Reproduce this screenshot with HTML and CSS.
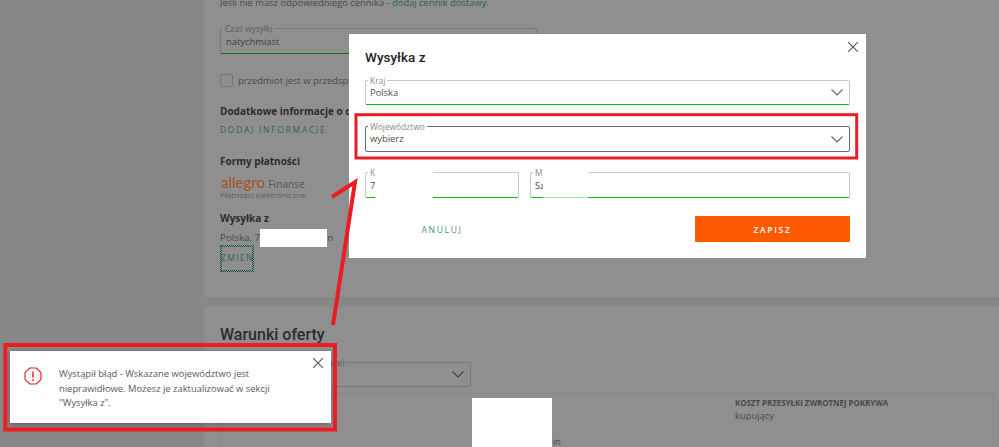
FILE: index.html
```html
<!DOCTYPE html>
<html lang="pl">
<head>
    <meta charset="UTF-8">
    <title>Wysyłka z</title>
    <link rel="stylesheet" href="styles.css">
</head>
<body>
    <div class="page">
        <div class="main">
            <section class="section section-top">
                <p class="hint">Jeśli nie masz odpowiedniego cennika - <a class="link">dodaj cennik dostawy.</a></p>
                <div class="field field-back field-ok field-time">
                    <span class="field-label">Czas wysyłki</span>
                    <span class="field-value">natychmiast</span>
                </div>
                <label class="check-row"><span class="check"></span>przedmiot jest w przedsprzedaży</label>
                <h4 class="sub first-sub">Dodatkowe informacje o dostawie</h4>
                <div class="action action-add">DODAJ INFORMACJE</div>
                <h4 class="sub pay-sub">Formy płatności</h4>
                <div class="logo"><span class="logo-mark">allegro</span> <span class="logo-name">Finanse</span></div>
                <div class="logo-note">Płatności elektroniczne.</div>
                <h4 class="sub ship-sub">Wysyłka z</h4>
                <div class="ship-line">Polska, 7<span class="ship-mask"></span>n</div>
                <div class="action action-change">ZMIEŃ</div>
            </section>
            <section class="section section-terms">
                <h2 class="terms-title">Warunki oferty</h2>
                <div class="field field-back field-return">
                    <span class="field-label">Warunki zwrotów (wymagane)</span>
                    <svg class="chevron" viewBox="0 0 12 7"><path d="M.5.5L6 6 11.5.5"/></svg>
                </div>
                <div class="terms-table">
                    <div></div>
                    <div class="terms-mid"><span class="mask-box"></span>in</div>
                    <div>
                        <div class="terms-head">KOSZT PRZESYŁKI ZWROTNEJ POKRYWA</div>
                        <div class="terms-val">kupujący</div>
                    </div>
                </div>
            </section>
        </div>
    </div>

    <div class="modal">
        <svg class="close modal-close" viewBox="0 0 10 10"><path d="M0 0l10 10M10 0L0 10"/></svg>
        <h3 class="modal-title">Wysyłka z</h3>
        <div class="field field-ok field-country">
            <span class="field-label">Kraj</span>
            <span class="field-value">Polska</span>
            <svg class="chevron" viewBox="0 0 12 7"><path d="M.5.5L6 6 11.5.5"/></svg>
        </div>
        <div class="field field-dark field-region">
            <span class="field-label">Województwo</span>
            <span class="field-value">wybierz</span>
            <svg class="chevron" viewBox="0 0 12 7"><path d="M.5.5L6 6 11.5.5"/></svg>
        </div>
        <div class="field-row">
            <div class="field field-ok">
                <span class="field-label">K</span>
                <span class="field-value">7</span>
                <span class="mask-code"></span>
            </div>
            <div class="field field-ok">
                <span class="field-label">M</span>
                <span class="field-value">Sz</span>
                <span class="mask-city"></span>
            </div>
        </div>
        <div class="modal-actions">
            <button class="btn-cancel">ANULUJ</button>
            <button class="btn-save">ZAPISZ</button>
        </div>
    </div>

    <div class="toast">
        <svg class="toast-icon" viewBox="0 0 18 18">
            <path class="octagon" d="M5.7 1h6.6L17 5.7v6.6L12.3 17H5.7L1 12.3V5.7z"/>
            <path class="mark" d="M9 4.5v6M9 12.3v1.6"/>
        </svg>
        <p class="toast-text">Wystąpił błąd - Wskazane województwo jest nieprawidłowe. Możesz je zaktualizować w sekcji "Wysyłka z".</p>
        <svg class="close toast-close" viewBox="0 0 10 10"><path d="M0 0l10 10M10 0L0 10"/></svg>
    </div>

    <!-- red marks drawn on top of the screenshot -->
    <svg class="marks" viewBox="0 0 999 447">
        <rect x="356" y="114.7" width="500.7" height="43.3"/>
        <rect x="5.3" y="345" width="329.7" height="84.5" class="thick"/>
        <path d="M332 197l23-15-22 143" class="thick"/>
    </svg>
</body>
</html>
```

FILE: styles.css
```css
* {
    box-sizing: border-box;
}
html, body {
    margin: 0;
    height: 100%;
    overflow: hidden;
}
body {
    font-family: "Open Sans", sans-serif;
    font-size: 9.4px;
    color: #3f3f3f;
    background-color: #868787;
}
.page {
    height: 447px;
    padding-left: 204px;
}
.section {
    background-color: #8f8f8f;
    padding-left: 16px;
    overflow: hidden;
}
.section-top {
    height: 297px;
}
.section-terms {
    height: 140px;
    margin-top: 10px;
    padding-top: 16px;
    overflow: visible;
}
.hint {
    margin: -5px 0 0;
    line-height: 16px;
    color: #4a4a4a;
}
.link {
    color: #2f5e5a;
}

/* fields */
.field {
    position: relative;
    height: 26px;
    border: 1px solid #c9c9c9;
    border-radius: 2px;
    --label-bg: #fff;
}
.field-label {
    position: absolute;
    top: -5px;
    left: 2px;
    padding: 0 2px;
    font-size: 8.4px;
    line-height: 9px;
    color: #8a8a8a;
    background-color: var(--label-bg);
    white-space: nowrap;
}
.field-value {
    position: absolute;
    top: 6px;
    left: 4px;
    line-height: 12px;
    color: #4d4d4d;
}
.field-ok {
    border-bottom: 1px solid #05bd05;
}
.field-dark {
    border-color: #6a6a6a;
}
.field-back {
    --label-bg: #8f8f8f;
    border-color: #7b7b7b;
}
.field-back .field-label {
    color: #5c5c5c;
}
.field-back .field-value {
    color: #3f3f3f;
}
.field-back.field-ok {
    border-bottom-color: #0f730f;
}
.field-time {
    width: 317px;
    margin-top: 17px;
}
.field-time .field-value {
    top: 7px;
    left: 5px;
}
.field-return {
    width: 251px;
    height: 25px;
    margin-top: 15px;
}
.field-return .field-label {
    left: 4px;
}
.chevron {
    position: absolute;
    top: 8px;
    right: 6px;
    width: 12px;
    height: 7px;
    fill: none;
    stroke: #666;
    stroke-width: 1.1;
}
.field-back .chevron {
    stroke: #444;
}

/* back page */
.check-row {
    display: flex;
    align-items: center;
    gap: 5px;
    height: 13px;
    margin-top: 20px;
    color: #4a4a4a;
    white-space: nowrap;
}
.check {
    width: 13px;
    height: 13px;
    border: 1px solid #777;
    border-radius: 2px;
}
.sub {
    margin: 0;
    font-size: 10px;
    line-height: 16px;
    font-weight: 700;
    color: #2c2c2c;
}
.first-sub {
    margin-top: 16px;
}
.pay-sub {
    margin-top: 16px;
}
.ship-sub {
    margin-top: 10px;
}
.action {
    font-size: 8.5px;
    letter-spacing: 1.7px;
    color: #33625e;
}
.action-add {
    margin-top: 4px;
    line-height: 14px;
}
.action-change {
    width: 34px;
    height: 27px;
    margin-top: -1px;
    line-height: 23px;
    border: 1px dotted #10574e;
    outline: 1px dotted #10574e;
    outline-offset: -2px;
    letter-spacing: 1.4px;
    white-space: nowrap;
}
.logo {
    height: 16px;
    margin-top: 5px;
    padding-left: 1px;
    line-height: 16px;
    white-space: nowrap;
}
.logo-mark {
    font-family: "Lato", sans-serif;
    font-size: 15px;
    color: #a8511c;
}
.logo-name {
    margin-left: 1px;
    font-size: 10.2px;
    color: #555;
}
.logo-note {
    font-size: 8px;
    line-height: 10px;
    color: #5e5e5e;
}
.ship-line {
    position: relative;
    height: 16px;
    margin-top: 4px;
    font-size: 9.8px;
    line-height: 16px;
    color: #4a4a4a;
    white-space: nowrap;
}
.ship-mask {
    display: inline-block;
    width: 67px;
    height: 18px;
    margin: -2px 0;
    vertical-align: middle;
    background-color: #fff;
}
.terms-title {
    margin: 0;
    font-family: "Roboto", sans-serif;
    font-size: 16px;
    font-weight: 500;
    line-height: 24px;
    color: #2c2c2c;
}
.terms-table {
    display: grid;
    grid-template-columns: 251px 263px 1fr;
    width: 774px;
    height: 60px;
    margin-top: 6px;
    border: 1px solid #858585;
}
.terms-mid {
    position: relative;
    padding: 40px 0 0 81px;
    line-height: 16px;
    color: #4a4a4a;
}
.mask-box {
    position: absolute;
    top: 4px;
    left: 0;
    width: 80px;
    height: 56px;
    background-color: #fff;
}
.terms-head {
    margin-top: 4px;
    font-size: 7.9px;
    font-weight: 700;
    line-height: 11px;
    color: #4a4a4a;
}
.terms-val {
    line-height: 14px;
    color: #4a4a4a;
}

/* modal */
.modal {
    position: absolute;
    top: 34px;
    left: 349px;
    width: 517px;
    height: 224px;
    padding: 13px 16px 0;
    background-color: #fff;
}
.modal-title {
    margin: 0 0 12px;
    font-family: "Roboto", sans-serif;
    font-size: 13.5px;
    font-weight: 500;
    line-height: 21px;
    color: #222;
}
.close {
    position: absolute;
    width: 10px;
    height: 10px;
    fill: none;
    stroke: #555;
    stroke-width: 1.1;
}
.modal-close {
    top: 8px;
    right: 8px;
}
.field-country {
    height: 25px;
}
.field-region {
    margin-top: 21px;
}
.field-region .chevron {
    top: 9px;
}
.field-row {
    display: grid;
    grid-template-columns: 154px 1fr;
    gap: 11px;
    margin-top: 20px;
}
.field-row .field-value {
    top: 7px;
}
.mask-code {
    position: absolute;
    top: -3px;
    left: 9px;
    width: 58px;
    height: 29px;
    background-color: #fff;
}
.mask-city {
    position: absolute;
    top: -3px;
    left: 12px;
    width: 45px;
    height: 28px;
    background-color: #fff;
    border-bottom: 1px solid #a5dea5;
}
.modal-actions {
    display: flex;
    justify-content: space-between;
    align-items: center;
    margin-top: 18px;
}
.btn-cancel, .btn-save {
    font-family: "Open Sans", sans-serif;
    font-size: 8.5px;
    letter-spacing: 1.7px;
    border: none;
    cursor: pointer;
}
.btn-cancel {
    width: 154px;
    height: 26px;
    color: #4a8f8c;
    background: none;
}
.btn-save {
    width: 155px;
    height: 26px;
    font-weight: 600;
    color: #fff;
    background-color: #ff5a00;
    border-radius: 1px;
}

/* toast */
.toast {
    position: absolute;
    top: 351px;
    left: 10px;
    width: 321px;
    height: 72px;
    padding: 16px 41px 0 49px;
    background-color: #fff;
    box-shadow: 0 2px 6px rgba(0, 0, 0, 0.3);
}
.toast-icon {
    position: absolute;
    top: 16px;
    left: 14px;
    width: 18px;
    height: 18px;
    fill: none;
    stroke: #e3141c;
}
.toast-icon .octagon {
    stroke-width: 1.1;
}
.toast-icon .mark {
    stroke-width: 1.4;
}
.toast-text {
    margin: 0;
    line-height: 14.5px;
    color: #5a5a5a;
}
.toast-close {
    top: 7px;
    right: 8px;
}
.marks {
    position: absolute;
    top: 0;
    left: 0;
    width: 999px;
    height: 447px;
    fill: none;
    stroke: #ed1c24;
    stroke-width: 3;
    pointer-events: none;
}
.marks .thick {
    stroke-width: 4;
}
```
